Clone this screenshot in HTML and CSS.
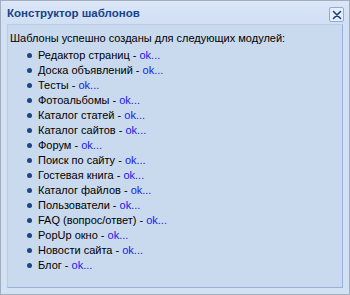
FILE: index.html
```html
<!doctype html>
<html lang="ru">
<head>
  <meta charset="utf-8" />
  <link rel="stylesheet" href="styles.css">
</head>
<body>
  <div class="window">
    <div class="title-bar">
      <span class="title">Конструктор шаблонов</span>
      <span class="close">
        <svg width="10" height="10" viewBox="0 0 10 10"><path d="M1.5 1.5 L8.5 8.5 M8.5 1.5 L1.5 8.5" stroke="#15428b" stroke-width="1.6" stroke-linecap="round"/></svg>
      </span>
    </div>
    <div class="panel">
      <p class="intro">Шаблоны успешно созданы для следующих модулей:</p>
      <ul class="modules">
        <li>Редактор страниц - <a>ok...</a></li>
        <li>Доска объявлений - <a>ok...</a></li>
        <li>Тесты - <a>ok...</a></li>
        <li>Фотоальбомы - <a>ok...</a></li>
        <li>Каталог статей - <a>ok...</a></li>
        <li>Каталог сайтов - <a>ok...</a></li>
        <li>Форум - <a>ok...</a></li>
        <li>Поиск по сайту - <a>ok...</a></li>
        <li>Гостевая книга - <a>ok...</a></li>
        <li>Каталог файлов - <a>ok...</a></li>
        <li>Пользователи - <a>ok...</a></li>
        <li>FAQ (вопрос/ответ) - <a>ok...</a></li>
        <li>PopUp окно - <a>ok...</a></li>
        <li>Новости сайта - <a>ok...</a></li>
        <li>Блог - <a>ok...</a></li>
      </ul>
    </div>
  </div>
</body>
</html>
```

FILE: styles.css
```css
body {
  margin: 0;
  font-family: 'Liberation Sans', Arial, sans-serif;
}

.window {
  width: 350px;
  height: 295px;
  box-sizing: border-box;
  border: 1px solid #a2adbd;
  background: #d3e1f5;
  display: flex;
  flex-direction: column;
}

.title-bar {
  height: 23px;
  display: flex;
  align-items: center;
  justify-content: space-between;
  padding: 0 5px 0 6px;
  background: linear-gradient(#dbe6f7, #d1dff4);
}

.title {
  color: #15428b;
  font-weight: bold;
  font-size: 11.5px;
}

.close {
  width: 13px;
  height: 13px;
  border: 1px solid #8eaad8;
  border-radius: 2px;
  background: #e6eefa;
  display: flex;
  align-items: center;
  justify-content: center;
  margin-top: 4px;
}

.panel {
  flex: 1;
  margin: 0 6px 6px 6px;
  border: 1px solid #98b1dc;
  border-top-color: #b9cbe7;
  border-left-color: #b9cbe7;
  background: #c9d9ee;
  padding: 5px 2px;
  font-size: 11px;
  color: #000;
}

.intro {
  margin: 1px 0 2px;
  line-height: 15px;
}

.modules {
  list-style: none;
  margin: 0;
  padding: 0 0 0 28px;
}

.modules li {
  height: 15px;
  line-height: 15px;
  position: relative;
}

.modules li::before {
  content: '';
  position: absolute;
  left: -11px;
  top: 5px;
  width: 5px;
  height: 5px;
  border-radius: 50%;
  background: #1d4585;
}

.modules a {
  color: #1a1ae8;
}
```
